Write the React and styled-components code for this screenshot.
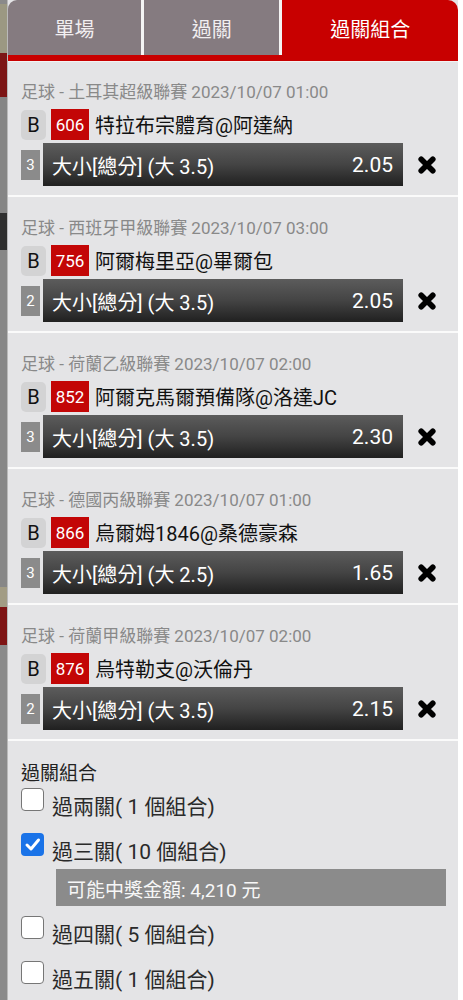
import React from 'react';
import styled, { createGlobalStyle } from 'styled-components';

const GlobalStyle = createGlobalStyle`
    html, body {
        margin: 0;
        padding: 0;
        background: #ffffff;
        height: 100%;
        overflow: hidden;
    }
    * {
        box-sizing: border-box;
    }
`

const FONT = `"Roboto", "Noto Sans CJK TC", sans-serif`;

const Page = styled.div`
    display: flex;
    align-items: stretch;
    min-height: 1000px;
    font-family: ${FONT};
`

// the dimmed page that peeks out behind the slip
const Backdrop = styled.div`
    width: 8px;
    flex: none;
    background: linear-gradient(to bottom,
        #8a8a8a 0, #8a8a8a 4px,
        #9b9882 4px, #9b9882 53px,
        #7c1515 53px, #7c1515 97px,
        #858585 97px, #858585 213px,
        #2f2f2f 213px, #2f2f2f 250px,
        #878787 250px, #878787 587px,
        #a29c84 587px, #a29c84 607px,
        #7e1414 607px, #7e1414 645px,
        #8a8a8a 645px, #8a8a8a 100%);
    border-right: 1px solid #b9b9b9;
`

const Panel = styled.div`
    width: 450px;
    flex: none;
    background: #e4e4e6;
`

const Tabs = styled.div`
    display: flex;
    height: 61px;
    border-bottom: 6px solid #c80000;
    box-shadow: 0 1px 0 #f3f3f3;
`

const Tab = styled.div`
    flex: ${p => p.$grow};
    display: flex;
    align-items: center;
    justify-content: center;
    background: ${p => (p.$active ? '#c80000' : '#857b80')};
    color: ${p => (p.$active ? '#ffffff' : '#f1eef0')};
    font-size: 20px;
    border-right: ${p => (p.$last ? 'none' : '3px solid #f4f4f4')};
    border-top-left-radius: ${p => (p.$first ? '9px' : '0')};
    border-top-right-radius: ${p => (p.$last ? '10px' : '0')};
    padding-top: 1px;
`

const Card = styled.div`
    padding: 20px 0 9px 13px;
    border-bottom: 2px solid #fafafa;
`

const League = styled.div`
    font-size: 17px;
    line-height: 22px;
    color: #898989;
    margin-bottom: 6px;
    white-space: nowrap;
`

const MatchRow = styled.div`
    display: flex;
    align-items: center;
    height: 31px;
    margin-bottom: 3px;
`

const SideTag = styled.span`
    width: 25px;
    height: 30px;
    border-radius: 5px;
    background: #d3d3d4;
    color: #111;
    font-size: 20px;
    display: flex;
    align-items: center;
    justify-content: center;
    margin-right: 5px;
`

const NumTag = styled.span`
    width: 38px;
    height: 31px;
    background: #c30606;
    color: #fff;
    font-size: 17px;
    display: flex;
    align-items: center;
    justify-content: center;
    margin-right: 6px;
`

const Team = styled.span`
    font-size: 20px;
    color: #111;
    white-space: nowrap;
`

const BetRow = styled.div`
    display: flex;
    align-items: center;
    height: 43px;
`

const Idx = styled.span`
    width: 19px;
    height: 30px;
    background: #8b8b8b;
    color: #fff;
    font-size: 15px;
    display: flex;
    align-items: center;
    justify-content: center;
    margin-right: 3px;
`

const BetBar = styled.div`
    width: 360px;
    height: 43px;
    display: flex;
    align-items: center;
    justify-content: space-between;
    padding: 1px 10px 0 9px;
    background: linear-gradient(to bottom, #5c5c5c 0%, #444 50%, #202020 100%);
    color: #fff;
    font-size: 20px;
    white-space: nowrap;
`

const Odds = styled.span`
    font-size: 21px;
`

const Remove = styled.button`
    border: 0;
    background: none;
    padding: 0;
    margin-left: 14px;
    width: 20px;
    height: 20px;
    display: flex;
    cursor: pointer;
`

const Combo = styled.div`
    padding: 21px 12px 0 13px;
`

const ComboTitle = styled.div`
    font-size: 19px;
    line-height: 24px;
    color: #222;
    margin-bottom: 2px;
`

const OptionRow = styled.label`
    display: flex;
    align-items: flex-start;
    height: ${p => (p.$checked ? '36px' : '45px')};
    cursor: pointer;
`

const Box = styled.span`
    width: 23px;
    height: 23px;
    flex: none;
    border-radius: 4px;
    border: ${p => (p.$checked ? 'none' : '1.5px solid #767676')};
    background: ${p => (p.$checked ? '#1a73e8' : '#ffffff')};
    display: flex;
    align-items: center;
    justify-content: center;
    margin-right: 8px;
`

const OptionText = styled.span`
    font-size: 21px;
    line-height: 23px;
    color: #2a2a2a;
    margin-top: 8px;
    white-space: nowrap;
`

const WinBox = styled.div`
    margin: 0 0 10px 35px;
    height: 37px;
    background: #8b8b8b;
    color: #f7f7f7;
    font-size: 19px;
    display: flex;
    align-items: center;
    padding: 1px 11px 0;
`

const CloseIcon = () => (
    <svg width="20" height="20" viewBox="0 0 20 20">
        <path d="M4.2 4.2 L15.8 15.8 M15.8 4.2 L4.2 15.8" stroke="#000" strokeWidth="5.6" strokeLinecap="round" fill="none" />
    </svg>
)

const Check = () => (
    <svg width="17" height="17" viewBox="0 0 17 17">
        <path d="M3 9 L7 13 L14.5 4" stroke="#fff" strokeWidth="3" strokeLinecap="round" strokeLinejoin="round" fill="none" />
    </svg>
)

const bets = [
    { league: '足球 - 土耳其超級聯賽 2023/10/07 01:00', no: '606', team: '特拉布宗體育@阿達納', idx: 3, bet: '大小[總分] (大 3.5)', odds: '2.05' },
    { league: '足球 - 西班牙甲級聯賽 2023/10/07 03:00', no: '756', team: '阿爾梅里亞@畢爾包', idx: 2, bet: '大小[總分] (大 3.5)', odds: '2.05' },
    { league: '足球 - 荷蘭乙級聯賽 2023/10/07 02:00', no: '852', team: '阿爾克馬爾預備隊@洛達JC', idx: 3, bet: '大小[總分] (大 3.5)', odds: '2.30' },
    { league: '足球 - 德國丙級聯賽 2023/10/07 01:00', no: '866', team: '烏爾姆1846@桑德豪森', idx: 3, bet: '大小[總分] (大 2.5)', odds: '1.65' },
    { league: '足球 - 荷蘭甲級聯賽 2023/10/07 02:00', no: '876', team: '烏特勒支@沃倫丹', idx: 2, bet: '大小[總分] (大 3.5)', odds: '2.15' },
]

const options = [
    { label: '過兩關( 1 個組合)', checked: false },
    { label: '過三關( 10 個組合)', checked: true, win: '可能中獎金額: 4,210 元' },
    { label: '過四關( 5 個組合)', checked: false },
    { label: '過五關( 1 個組合)', checked: false },
]

const App = () => {

    return (
        <Page>
            <GlobalStyle />
            <Backdrop />
            <Panel>
                <Tabs>
                    <Tab $grow="135" $first>單場</Tab>
                    <Tab $grow="137">過關</Tab>
                    <Tab $grow="178" $active $last>過關組合</Tab>
                </Tabs>

                {bets.map(b => (
                    <Card key={b.no}>
                        <League>{b.league}</League>
                        <MatchRow>
                            <SideTag>B</SideTag>
                            <NumTag>{b.no}</NumTag>
                            <Team>{b.team}</Team>
                        </MatchRow>
                        <BetRow>
                            <Idx>{b.idx}</Idx>
                            <BetBar>
                                <span>{b.bet}</span>
                                <Odds>{b.odds}</Odds>
                            </BetBar>
                            <Remove aria-label="remove">
                                <CloseIcon />
                            </Remove>
                        </BetRow>
                    </Card>
                ))}

                <Combo>
                    <ComboTitle>過關組合</ComboTitle>
                    {options.map(o => (
                        <React.Fragment key={o.label}>
                            <OptionRow $checked={o.checked}>
                                <Box $checked={o.checked}>{o.checked && <Check />}</Box>
                                <OptionText>{o.label}</OptionText>
                            </OptionRow>
                            {o.win && <WinBox>{o.win}</WinBox>}
                        </React.Fragment>
                    ))}
                </Combo>
            </Panel>
        </Page>
    )
}

export default App;
